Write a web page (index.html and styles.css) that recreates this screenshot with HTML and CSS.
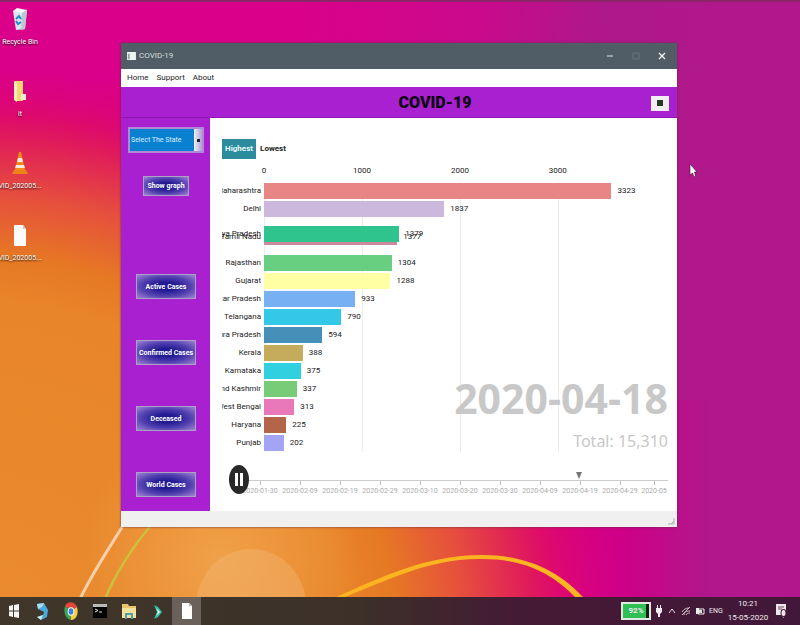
FILE: index.html
```html
<!DOCTYPE html>
<html lang="en">
<head>
<meta charset="utf-8">
<title>COVID-19</title>
<link rel="stylesheet" href="styles.css">
</head>
<body>
<svg class="wallpaper" viewBox="0 0 800 625" preserveAspectRatio="none" aria-hidden="true">
  <defs>
    <linearGradient id="base" gradientUnits="userSpaceOnUse" x1="300" y1="0" x2="700" y2="60">
      <stop offset="0" stop-color="#da008a"/>
      <stop offset=".45" stop-color="#c90a8c"/>
      <stop offset=".75" stop-color="#ae188a"/>
      <stop offset="1" stop-color="#b0188c"/>
    </linearGradient>
    <linearGradient id="low" gradientUnits="userSpaceOnUse" x1="540" y1="0" x2="710" y2="0">
      <stop offset="0" stop-color="#d9007e"/>
      <stop offset=".5" stop-color="#cd0088"/>
      <stop offset="1" stop-color="#b0188c"/>
    </linearGradient>
    <radialGradient id="sun" gradientUnits="userSpaceOnUse" cx="0" cy="0" r="1" gradientTransform="translate(-40 640) scale(663 585)">
      <stop offset="0" stop-color="#ec8c32"/>
      <stop offset=".25" stop-color="#e9882c"/>
      <stop offset=".58" stop-color="#e8852a"/>
      <stop offset=".66" stop-color="#e67824"/>
      <stop offset=".76" stop-color="#e6503c"/>
      <stop offset=".86" stop-color="#e01c5a"/>
      <stop offset=".9" stop-color="#de0a6c"/>
      <stop offset="1" stop-color="#da0082" stop-opacity="0"/>
    </radialGradient>
    <radialGradient id="glow" gradientUnits="userSpaceOnUse" cx="220" cy="560" r="140">
      <stop offset="0" stop-color="#f2a850" stop-opacity=".8"/>
      <stop offset="1" stop-color="#f2a850" stop-opacity="0"/>
    </radialGradient>
  </defs>
  <rect width="800" height="625" fill="url(#base)"/>
  <rect y="400" width="800" height="225" fill="url(#low)"/>
  <rect width="800" height="625" fill="url(#sun)"/>
  <rect width="800" height="625" fill="url(#glow)"/>
  <ellipse cx="251" cy="606" rx="55" ry="57" fill="#f3b878" fill-opacity=".4"/>
  <path d="M124 524C108 550 94 570 80 599" fill="none" stroke="#f8cfa8" stroke-width="3"/>
  <path d="M152 524C130 550 115 575 105 599" fill="none" stroke="#c9c23c" stroke-width="2.5"/>
  <path d="M334 598C380 578 425 555 482 555C528 555 560 572 584 598L576 598C552 573 524 559 482 559C428 558 385 582 342 598Z" fill="#fcb420"/>
  <rect width="800" height="2" fill="#8c2468"/>
</svg>

<main class="desktop">
  <nav class="shortcuts" aria-label="Desktop">
    <a href="#"><svg viewBox="0 0 16 24"><path d="M1 4L15 3L13 22L4 23Z" fill="#dce6ee"/><path d="M1 4L5 1L15 3L10 6Z" fill="#f8f8fa"/><path d="M10 6L15 3L13 22L9 23Z" fill="#b9c8d4"/><path d="M4 12L7 9L9 12M9 15L6 17L4 14" fill="none" stroke="#2688c8" stroke-width="2"/></svg><span>Recycle Bin</span></a>
    <a href="#"><svg viewBox="0 0 16 24"><path d="M3 2H11V22H3Z" fill="#f4d674"/><path d="M2 2L5 4V23L2 21Z" fill="#fbeeb8"/><path d="M9 15H14V21H9Z" fill="#f2e9cf"/></svg><span>it</span></a>
    <a href="#"><svg viewBox="0 0 16 24"><path d="M7 1H9L13 19H3Z" fill="#f08a1c"/><path d="M6 7H10L11 11H5ZM4 14H12L13 17H3Z" fill="#f7ead8"/><path d="M2 19H14L16 23H0Z" fill="#ee8418"/></svg><span>VID_202005...</span></a>
    <a href="#"><svg viewBox="0 0 16 24"><path d="M2 2H11L14 6V23H2Z" fill="#fdfafa"/><path d="M11 2V6H14Z" fill="#cfc8cb"/></svg><span>VID_202005...</span></a>
  </nav>

  <section class="window">
    <header class="titlebar">
      <svg class="app-icon" viewBox="0 0 10 9"><path d="M0 0H10V9H0Z" fill="#eef4f4"/><path d="M1 2H3V8H1Z" fill="#8fa6a6"/></svg>
      <span class="caption">COVID-19</span>
      <button aria-label="Minimize"><svg viewBox="0 0 8 8"><path d="M1 4H7" stroke="#dde3e6"/></svg></button>
      <button aria-label="Maximize" disabled><svg viewBox="0 0 8 8"><path d="M1 1H7V7H1Z" fill="none" stroke="#6b747b"/></svg></button>
      <button aria-label="Close"><svg viewBox="0 0 8 8"><path d="M1 1L7 7M7 1L1 7" stroke="#f2f4f5" stroke-width="1.3"/></svg></button>
    </header>
    <nav class="menubar"><a href="#">Home</a><a href="#">Support</a><a href="#">About</a></nav>
    <div class="banner">
      <h1>COVID-19</h1>
      <button class="options" aria-label="Options"><svg viewBox="0 0 6 6"><path d="M0 0H6V6H0Z" fill="#243a20"/></svg></button>
    </div>
    <div class="content">
      <aside class="sidebar">
        <select aria-label="State"><option>Select The State</option></select>
        <button class="glow small">Show graph</button>
        <div class="actions">
          <button class="glow">Active Cases</button>
          <button class="glow">Confirmed Cases</button>
          <button class="glow">Deceased</button>
          <button class="glow">World Cases</button>
        </div>
      </aside>

      <section class="chart">
        <div class="toggle"><button class="on">Highest</button><button>Lowest</button></div>
        <div class="axis"><span>0</span><span>1000</span><span>2000</span><span>3000</span></div>
        <div class="plot">
          <div class="gridlines"><i></i><i></i><i></i><i></i></div>
          <ol class="rows">
            <li><span class="name">Maharashtra</span><div class="track"><div class="bar red" style="width:86%"></div><span>3323</span></div></li>
            <li><span class="name">Delhi</span><div class="track"><div class="bar lilac" style="width:44.6%"></div><span>1837</span></div></li>
            <li class="swap">
              <div class="racer behind"><span class="name">Tamil Nadu</span><div class="track"><div class="bar mauve" style="width:33%"></div><span>1377</span></div></div>
              <div class="racer"><span class="name">Madhya Pradesh</span><div class="track"><div class="bar jade" style="width:33.5%"></div><span>1379</span></div></div>
            </li>
            <li><span class="name">Rajasthan</span><div class="track"><div class="bar green" style="width:31.6%"></div><span>1304</span></div></li>
            <li><span class="name">Gujarat</span><div class="track"><div class="bar yellow" style="width:31.3%"></div><span>1288</span></div></li>
            <li><span class="name">Uttar Pradesh</span><div class="track"><div class="bar sky" style="width:22.6%"></div><span>933</span></div></li>
            <li><span class="name">Telangana</span><div class="track"><div class="bar cyan" style="width:19.1%"></div><span>790</span></div></li>
            <li><span class="name">Andhra Pradesh</span><div class="track"><div class="bar steel" style="width:14.4%"></div><span>594</span></div></li>
            <li><span class="name">Kerala</span><div class="track"><div class="bar gold" style="width:9.6%"></div><span>388</span></div></li>
            <li><span class="name">Karnataka</span><div class="track"><div class="bar aqua" style="width:9.1%"></div><span>375</span></div></li>
            <li><span class="name">Jammu and Kashmir</span><div class="track"><div class="bar leaf" style="width:8.1%"></div><span>337</span></div></li>
            <li><span class="name">West Bengal</span><div class="track"><div class="bar pink" style="width:7.5%"></div><span>313</span></div></li>
            <li><span class="name">Haryana</span><div class="track"><div class="bar rust" style="width:5.5%"></div><span>225</span></div></li>
            <li><span class="name">Punjab</span><div class="track"><div class="bar violet" style="width:4.9%"></div><span>202</span></div></li>
          </ol>
          <div class="stamp"><strong>2020-04-18</strong><span>Total: 15,310</span></div>
        </div>
        <div class="timeline">
          <svg class="marker" viewBox="0 0 6 7" style="left:78.4%"><path d="M0 0H6L3 7Z" fill="#777"/></svg>
          <ol>
            <li>2020-01-30</li><li>2020-02-09</li><li>2020-02-19</li><li>2020-02-29</li><li>2020-03-10</li><li>2020-03-20</li><li>2020-03-30</li><li>2020-04-09</li><li>2020-04-19</li><li>2020-04-29</li><li>2020-05</li>
          </ol>
          <button class="pause" aria-label="Pause"><svg viewBox="0 0 20 29"><ellipse cx="10" cy="14.500" rx="10" ry="14.500" fill="#292929"/><path d="M6 8H9V21H6ZM11 8H14V21H11Z" fill="#fff"/></svg></button>
        </div>
      </section>
    </div>
    <footer class="statusbar"><svg viewBox="0 0 8 8"><path d="M7 1V7H1M7 4L4 7" fill="none" stroke="#a9b3ae"/></svg></footer>
  </section>

  <svg class="pointer" viewBox="0 0 8 15"><path d="M1 1V12L3.500 10L5 14L6.500 13L5.500 9H8Z" fill="#fff" stroke="#3a1034" stroke-width=".6"/></svg>
</main>

<footer class="taskbar">
  <button aria-label="Start"><svg viewBox="0 0 16 20"><path d="M3 5L7 4V9.500H3ZM8 4L13 3V9.500H8ZM3 10.500H7V16L3 15ZM8 10.500H13V17L8 16Z" fill="#f5f5f5"/></svg></button>
  <button aria-label="Skype"><svg viewBox="0 0 16 20"><path d="M3 3L10 2L14 9L13 16L7 19L3 16L9 14L10 11L4 8Z" fill="#4aa9dc"/><path d="M3 3L10 2L8 6L4 8Z" fill="#a9dcf4"/><path d="M3 16L9 14L7 19Z" fill="#d4e9f2"/></svg></button>
  <button aria-label="Chrome"><svg viewBox="0 0 16 20"><path d="M8 10L2 5C4 0 12 0 14 6Z" fill="#e2483a"/><path d="M8 10L2 5C0 12 3 18 8 19Z" fill="#3ba457"/><path d="M8 10L14 6C16 13 13 19 8 19Z" fill="#f6cd3c"/><ellipse cx="8" cy="10.500" rx="3.300" ry="4.300" fill="#fff"/><ellipse cx="8" cy="10.500" rx="2.400" ry="3.200" fill="#3f7fe0"/></svg></button>
  <button aria-label="Command Prompt"><svg viewBox="0 0 16 20"><path d="M1 4H15V17H1Z" fill="#050505"/><path d="M1 3H15V6H1Z" fill="#b9b9b9"/><path d="M3 8L6 9.500L3 11M7 11H10" fill="none" stroke="#ddd"/></svg></button>
  <button aria-label="File Explorer"><svg viewBox="0 0 16 20"><path d="M1 3H7L8 5H15V17H1Z" fill="#e9c46a"/><path d="M1 7H15V17H1Z" fill="#f5e19c"/><path d="M4 12H12V18H10V14H6V18H4Z" fill="#4f9fa8"/></svg></button>
  <button aria-label="Filmora"><svg viewBox="0 0 16 20"><path d="M4 4L8 6L12 11L8 16L4 18L7 11Z" fill="#2fc2a8"/><path d="M6 7L10 11L6 15L8 11Z" fill="#f2fffc"/></svg></button>
  <button class="active" aria-label="COVID-19"><svg viewBox="0 0 16 20"><path d="M3 2H10L13 5V18H3Z" fill="#fdfdfb"/><path d="M10 2V5H13Z" fill="#bdb8b0"/></svg></button>
  <div class="tray">
    <span class="charge">92%</span>
    <svg class="plug" viewBox="0 0 8 12"><path d="M2 0H3V3H5V0H6V3H7V7L5 9V12H3V9L1 7V3H2Z" fill="#f3eef1"/></svg>
    <svg viewBox="0 0 10 10"><path d="M2 7L5 3L8 7" fill="none" stroke="#e9dfe6"/></svg>
    <svg viewBox="0 0 10 10"><path d="M1 9L9 1M3 9C3 6 5 5 9 5M5 9C6 7 7 7 9 7M1 6C3 3 5 2 8 2" fill="none" stroke="#c9b9c5"/></svg>
    <svg viewBox="0 0 10 10"><path d="M1 2H4V8H1Z" fill="#eee"/><path d="M3 3H9V8H3Z" fill="none" stroke="#eee"/><path d="M4 4H7V7H4Z" fill="#ddd"/></svg>
    <span class="lang">ENG</span>
    <time><span>10:21</span><span>15-05-2020</span></time>
    <svg class="notes" viewBox="0 0 12 16"><path d="M1 1H11V12H9V15L6 12H1Z" fill="#efe6ec"/><path d="M3 4H9M3 6H7" stroke="#6d4a66"/><ellipse cx="8.500" cy="10" rx="3" ry="4" fill="#4a1a3c"/><ellipse cx="8.500" cy="10" rx="2" ry="3" fill="#efe6ec"/></svg>
  </div>
</footer>
</body>
</html>
```
FILE: styles.css
```css
* { box-sizing: border-box; }

body {
  margin: 0;
  min-height: 100vh;
  display: flex;
  flex-direction: column;
  font: 8px/12px Roboto, "Liberation Sans", sans-serif;
  color: #222;
}

button {
  margin: 0;
  padding: 0;
  border: 0;
  background: none;
  font: inherit;
  color: inherit;
}

a { color: inherit; text-decoration: none; }
ol { list-style: none; margin: 0; padding: 0; }
svg { display: block; }

.wallpaper {
  position: absolute;
  inset: 0;
  width: 100%;
  height: 100%;
  z-index: -1;
}

.desktop { flex: 1; position: relative; }

/* Desktop shortcuts */
.shortcuts {
  width: 40px;
  padding-top: 7px;
  display: flex;
  flex-direction: column;
}
.shortcuts a {
  height: 72px;
  display: flex;
  flex-direction: column;
  align-items: center;
  gap: 5px;
  color: #fff;
  font-size: 7px;
  text-shadow: 0 1px 2px #000;
  white-space: nowrap;
}
.shortcuts svg { width: 16px; height: 24px; }

/* Application window */
.window {
  position: absolute;
  left: 121px;
  right: 123px;
  top: 43px;
  background: #fff;
  box-shadow: 0 0 2px #5a3040;
}
.titlebar {
  height: 26px;
  padding: 0 10px 0 6px;
  display: flex;
  align-items: center;
  background: #505c66;
  color: #d5dcdf;
}
.app-icon { width: 9px; height: 8px; }
.caption { flex: 1; margin-left: 3px; }
.titlebar button { width: 10px; margin-left: 16px; }
.titlebar button svg { width: 8px; height: 8px; margin: auto; }

.menubar {
  height: 18px;
  padding: 0 6px;
  display: flex;
  align-items: center;
  gap: 8px;
}

.banner {
  height: 31px;
  padding: 2px 8px 0 98px;
  display: flex;
  align-items: center;
  background: #a820d0;
  border-bottom: 1px solid #8c18b4;
}
.banner h1 {
  flex: 1;
  margin: 0;
  text-align: center;
  font-size: 16px;
  font-weight: 900;
  line-height: 20px;
  color: #0c0410;
}
.options { width: 18px; height: 15px; background: #f1eef2; }
.options svg { width: 6px; height: 6px; margin: auto; }

.content { display: flex; }

/* Sidebar */
.sidebar {
  width: 89px;
  padding: 9px 6px 14px 7px;
  background: #a820d0;
  display: flex;
  flex-direction: column;
  align-items: center;
}
.sidebar select {
  appearance: none;
  width: 100%;
  height: 26px;
  padding: 0 1px;
  border: 2px solid #b08ad8;
  border-radius: 0;
  font: inherit;
  font-size: 7px;
  color: #d8f0ff;
  background:
    linear-gradient(#222, #222) right 2px center / 3px 3px no-repeat,
    linear-gradient(90deg, #f4f0fa, #a9a0d0) right / 8px 100% no-repeat,
    #0a80d0;
}
.glow {
  width: 60px;
  height: 25px;
  border: 1px solid #a9a2c4;
  background: radial-gradient(ellipse at center, #221a92 25%, #5240b0 60%, #a184d6 100%);
  color: #fff;
  font-size: 7px;
  font-weight: bold;
  line-height: 10px;
  white-space: nowrap;
}
.glow.small { width: 46px; height: 20px; margin-top: 23px; }
.actions {
  margin-top: 78px;
  display: flex;
  flex-direction: column;
  gap: 41px;
}

/* Bar chart */
.chart { flex: 1; min-width: 0; padding: 21px 9px 0 12px; }
.toggle { display: flex; }
.toggle button {
  width: 34px;
  height: 20px;
  font-weight: bold;
}
.toggle .on { background: #2c8c9e; color: #e8fbff; }

.axis,
.gridlines {
  display: grid;
  grid-template-columns: repeat(4, 8fr) 1fr;
  margin-left: 42px;
}
.axis { margin-top: 6px; }
.axis span { width: 0; display: flex; justify-content: center; }

.plot { position: relative; padding-top: 5px; }
.gridlines { position: absolute; inset: 5px 0 0; }
.gridlines i { border-left: 1px solid #ececec; }

.rows { position: relative; }
.rows li,
.racer {
  display: grid;
  grid-template-columns: 39px 1fr;
  column-gap: 3px;
  align-items: center;
  height: 18px;
}
.name {
  display: flex;
  justify-content: flex-end;
  overflow: hidden;
  white-space: nowrap;
}
.track { display: flex; align-items: center; gap: 6px; }
.bar { height: 16px; }

/* Two states trading places part way through the animation */
.rows .swap { display: block; height: 36px; padding-top: 7px; }
.racer.behind { margin: 3px 0 -21px; }

.red { background: #e88585; }
.lilac { background: #ccb8dc; }
.mauve { background: #c98a9c; }
.jade { background: #2fc48e; }
.green { background: #68cf80; }
.yellow { background: #ffffa4; }
.sky { background: #78b0f4; }
.cyan { background: #34c8e8; }
.steel { background: #4490b8; }
.gold { background: #c4ac5c; }
.aqua { background: #30d0e0; }
.leaf { background: #78cc78; }
.pink { background: #e878b8; }
.rust { background: #b46448; }
.violet { background: #a4a4f4; }

.stamp {
  position: absolute;
  right: 0;
  bottom: 0;
  display: flex;
  flex-direction: column;
  align-items: flex-end;
  font-family: "Noto Sans", "Open Sans", sans-serif;
  color: #c8c8c8;
}
.stamp strong { font-size: 41px; line-height: 64px; }
.stamp span { font-size: 16px; line-height: 22px; }

/* Date slider */
.timeline {
  position: relative;
  margin: 28px 0 0 18px;
  padding-bottom: 14px;
}
.timeline ol {
  display: grid;
  grid-template-columns: repeat(10, minmax(0, 10fr)) minmax(0, 7fr);
  border-top: 1px solid #ccc;
  color: #aaa;
  font-size: 7px;
}
.timeline li {
  display: flex;
  flex-direction: column;
  align-items: center;
  white-space: nowrap;
}
.timeline li::before {
  content: "";
  height: 4px;
  border-left: 1px solid #bbb;
}
.marker { position: absolute; top: -8px; width: 6px; height: 7px; }
.pause { position: absolute; left: -11px; top: -15px; }
.pause svg { width: 20px; height: 29px; }

.statusbar {
  height: 16px;
  display: flex;
  justify-content: flex-end;
  align-items: flex-end;
  padding: 2px;
  background: #f0f0f0;
}
.statusbar svg { width: 8px; height: 8px; }

.pointer { position: absolute; left: 689px; top: 163px; width: 8px; height: 15px; }

/* Taskbar */
.taskbar {
  height: 28px;
  display: flex;
  background: linear-gradient(90deg, #40372a, #3c3028 45%, #441a34 65%, #42183a);
  color: #f0e8ee;
}
.taskbar button { width: 29px; display: grid; place-items: center; }
.taskbar button:first-child { width: 27px; }
.taskbar button svg { width: 16px; height: 20px; }
.taskbar .active { background: #6a625a; }
.tray {
  margin-left: auto;
  padding-right: 13px;
  display: flex;
  align-items: center;
  gap: 4px;
  font-size: 7px;
}
.tray svg { width: 10px; height: 12px; }
.tray .plug { width: 8px; }
.tray .notes { width: 12px; height: 16px; }
.charge {
  width: 30px;
  height: 18px;
  border: 2px solid #dfe8e2;
  background: linear-gradient(90deg, #2fbf55 88%, #0c2012 0);
  text-align: center;
  font-size: 8px;
  font-weight: bold;
  line-height: 14px;
}
.lang { width: 15px; }
.tray time {
  width: 40px;
  margin-right: 3px;
  display: flex;
  flex-direction: column;
  align-items: center;
  font-size: 8px;
  line-height: 14px;
  white-space: nowrap;
}
```
